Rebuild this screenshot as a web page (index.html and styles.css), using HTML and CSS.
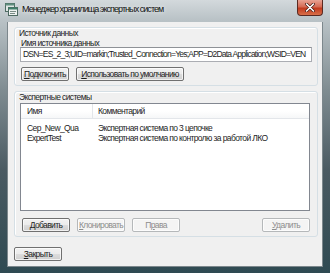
FILE: index.html
```html
<!DOCTYPE html>
<html lang="ru">
<head>
    <meta charset="UTF-8">
    <title>Менеджер хранилища экспертных систем</title>
    <link rel="stylesheet" href="styles.css">
</head>
<body>
    <div class="window">
        <div class="titlebar">
            <svg class="app-icon" width="13" height="13" viewBox="0 0 13 13">
                <rect x="0.5" y="0.5" width="9" height="8" fill="#dfe6e4" stroke="#4f6b63"/>
                <rect x="0.5" y="0.5" width="9" height="2" fill="#5f8f7f"/>
                <rect x="3.5" y="4.5" width="9" height="8" fill="#eef2f0" stroke="#4f6b63"/>
                <rect x="3.5" y="4.5" width="9" height="2" fill="#3f7f6a"/>
                <line x1="5" y1="8.5" x2="11" y2="8.5" stroke="#7a8c86"/>
                <line x1="5" y1="10.5" x2="10" y2="10.5" stroke="#7a8c86"/>
            </svg>
            <span class="title">Менеджер хранилища экспертных систем</span>
            <div class="close-btn">
                <svg width="10" height="9" viewBox="0 0 10 9">
                    <path d="M1.5 1 L8.5 8 M8.5 1 L1.5 8" stroke="#4a1a14" stroke-width="3" stroke-linecap="round"/>
                    <path d="M1.5 1 L8.5 8 M8.5 1 L1.5 8" stroke="#fff" stroke-width="1.6" stroke-linecap="round"/>
                </svg>
            </div>
        </div>

        <div class="client">
            <div class="group">
                <div class="group-title">Источник данных</div>
                <div class="field-label"><u>И</u>мя источника данных</div>
                <div class="input">DSN=ES_2_3;UID=markin;Trusted_Connection=Yes;APP=D2Data Application;WSID=VEN</div>
                <div class="btn-row">
                    <button class="btn"><u>П</u>одключить</button>
                    <button class="btn wide"><u>И</u>спользовать по умолчанию</button>
                </div>
            </div>

            <div class="group">
                <div class="group-title">Экспертные системы</div>
                <div class="listview">
                    <div class="lv-header">
                        <div class="col-name">Имя</div>
                        <div class="col-comment">Комментарий</div>
                    </div>
                    <div class="lv-body">
                        <div class="lv-row">
                            <div class="col-name">Cep_New_Qua</div>
                            <div class="col-comment">Экспертная система по 3 цепочке</div>
                        </div>
                        <div class="lv-row">
                            <div class="col-name">ExpertTest</div>
                            <div class="col-comment">Экспертная система по контролю за работой ЛКО</div>
                        </div>
                    </div>
                </div>
                <div class="btn-row list-buttons">
                    <button class="btn"><u>Д</u>обавить</button>
                    <button class="btn" disabled><u>К</u>лонировать</button>
                    <button class="btn" disabled>П<u>р</u>ава</button>
                    <button class="btn push-right" disabled><u>У</u>далить</button>
                </div>
            </div>

            <div class="footer">
                <button class="btn"><u>З</u>акрыть</button>
            </div>
        </div>
    </div>
</body>
</html>
```

FILE: styles.css
```css
body {
    margin: 0;
    background: #2b3a40;
    font-family: 'Liberation Sans', Arial, sans-serif;
    font-size: 8.5px;
    letter-spacing: -0.62px;
    color: #1e1e1e;
}

.window {
    width: 330px;
    height: 273px;
    display: flex;
    flex-direction: column;
    background: linear-gradient(to bottom, #d3d9dc 0, #b9c2c6 20px, #7f8c91 90px, #4a5a62 170px, #2f4a52 273px);
}

.titlebar {
    height: 22px;
    display: flex;
    align-items: flex-start;
    padding-left: 5px;
}

.app-icon {
    margin-top: 3px;
}

.title {
    margin-left: 4px;
    margin-top: 4px;
    font-size: 9px;
    letter-spacing: -0.95px;
    color: #111;
    text-shadow: 0 0 4px rgba(255, 255, 255, 0.8);
}

.close-btn {
    margin-left: auto;
    margin-right: 7px;
    width: 26px;
    height: 16px;
    display: flex;
    align-items: center;
    justify-content: center;
    border: 1px solid #5a2a22;
    border-top: none;
    border-radius: 0 0 4px 4px;
    background: linear-gradient(to bottom, #e8a394 0, #d56a54 45%, #c23a1e 55%, #d8704a 100%);
    box-sizing: border-box;
}

.client {
    flex: 1;
    margin: 0 7px 6px 7px;
    padding: 5px 4px 0 6px;
    background: #f0f0f0;
    border: 1px solid #7c878c;
    border-top: none;
    display: flex;
    flex-direction: column;
}

.group {
    border: 1px solid #d5dfe5;
    border-radius: 3px;
    box-shadow: inset 1px 1px 0 #fff;
    padding: 0 5px 4px 5px;
    display: flex;
    flex-direction: column;
}

.group + .group {
    margin-top: 5px;
}

.group-title {
    line-height: 11px;
    height: 11px;
    margin-left: -1px;
}

.field-label {
    line-height: 8px;
    height: 8px;
    margin-left: 1px;
}

.input {
    height: 15px;
    line-height: 13px;
    box-sizing: border-box;
    border: 1px solid #abadb3;
    border-top-color: #8e9196;
    background: #fff;
    padding-left: 2px;
    white-space: nowrap;
    overflow: hidden;
    letter-spacing: -0.78px;
}

.btn-row {
    display: flex;
    gap: 7px;
    margin-top: 5px;
    padding-left: 1px;
}

.btn {
    width: 48px;
    height: 14px;
    padding: 0;
    font-family: inherit;
    font-size: inherit;
    letter-spacing: inherit;
    color: #1e1e1e;
    border: 1px solid #707070;
    border-radius: 2px;
    background: linear-gradient(to bottom, #f2f2f2 0, #ebebeb 50%, #dddddd 50%, #cfcfcf 100%);
    box-shadow: inset 0 0 0 1px rgba(255, 255, 255, 0.7);
    line-height: 12px;
    white-space: nowrap;
}

.btn.wide {
    width: 108px;
}

.btn:disabled {
    color: #8d8d8d;
    border-color: #b5b8ba;
    background: #f4f4f4;
}

.listview {
    height: 108px;
    box-sizing: border-box;
    margin-right: 2px;
    border: 1px solid #828790;
    background: #fff;
}

.lv-header {
    display: flex;
    height: 14px;
    line-height: 14px;
    border-bottom: 1px solid #e3e6ea;
    background: linear-gradient(to bottom, #fff 0, #fff 50%, #f6f7f8 100%);
}

.lv-header .col-name {
    border-right: 1px solid #e3e6ea;
}

.col-name {
    width: 72px;
    padding-left: 6px;
    box-sizing: border-box;
}

.col-comment {
    padding-left: 5px;
    white-space: nowrap;
}

.lv-body {
    padding-top: 4px;
}

.lv-row {
    display: flex;
    height: 10px;
    line-height: 10px;
}

.list-buttons {
    margin-top: 7px;
    padding-left: 2px;
    padding-right: 2px;
}

.push-right {
    margin-left: auto;
}

.footer {
    margin-top: 10px;
}
```
